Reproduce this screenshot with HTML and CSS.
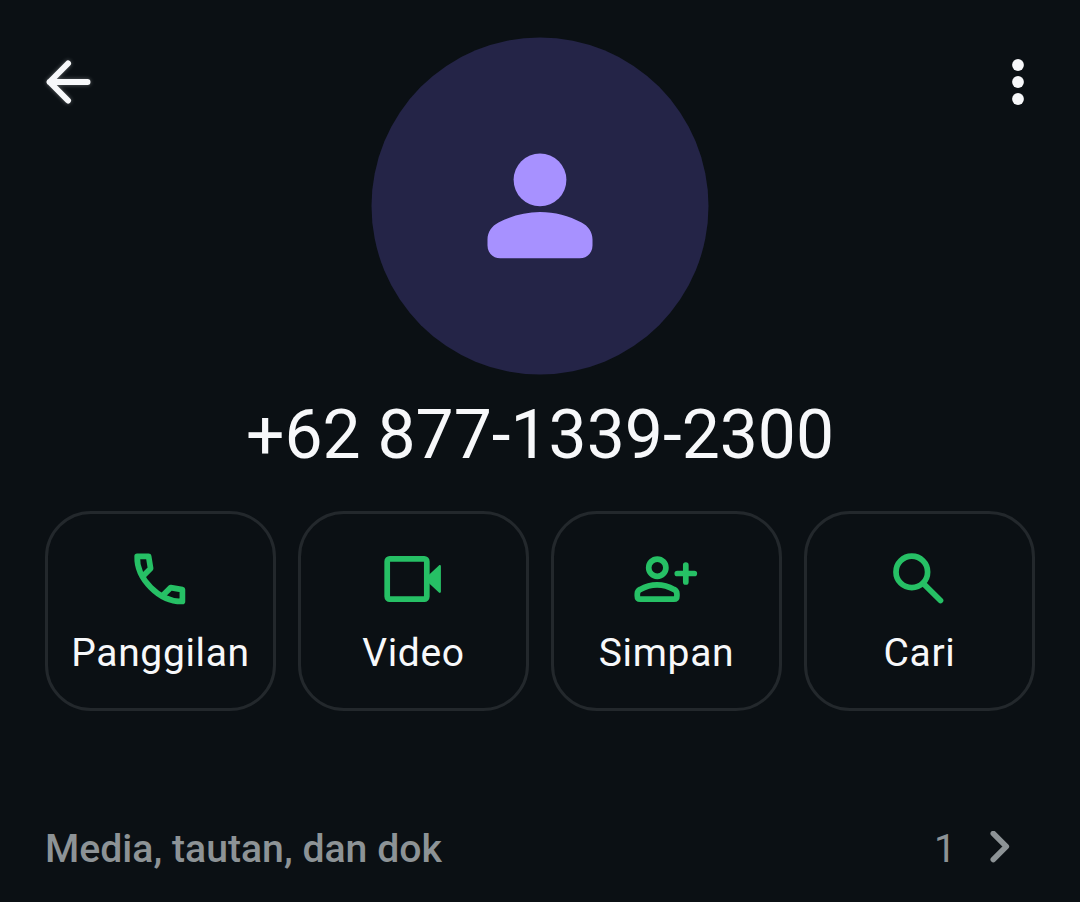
FILE: index.html
```html
<!DOCTYPE html>
<html lang="id">

<head>
  <meta charset="utf-8">
  <meta name="viewport" content="width=device-width, initial-scale=1.0">
  <title>Info kontak</title>
  <link rel="stylesheet" href="styles.css">
</head>

<body>
  <header class="header">
    <button class="icon-button" aria-label="Kembali">
      <svg class="back" width="56" height="56" viewBox="0 0 56 56">
        <path d="M28 9.500L9.600 28 28 46.500M9.600 28H47.500" />
      </svg>
    </button>
    <svg class="avatar" viewBox="0 0 338 338">
      <circle class="avatar-bg" cx="169" cy="169" r="168.500" />
      <circle cx="169" cy="142.800" r="26.400" />
      <path
        d="M116.500 202.500c0-7.500 4.300-13.600 11-17 12.500-6.500 26.700-10.500 41.500-10.500s29 4 41.500 10.500c6.700 3.400 11 9.500 11 17v6c0 7.500-5.500 12.800-12.800 12.800h-79.400c-7.300 0-12.800-5.300-12.800-12.800z" />
    </svg>
    <button class="icon-button" aria-label="Menu">
      <svg class="more" width="56" height="56" viewBox="0 0 56 56">
        <circle cx="28" cy="11" r="5.900" />
        <circle cx="28" cy="28" r="5.900" />
        <circle cx="28" cy="45" r="5.900" />
      </svg>
    </button>
  </header>

  <h1 class="number">+62 877-1339-2300</h1>

  <div class="actions">
    <button class="action">
      <svg class="icon" viewBox="0 0 68 68">
        <path
          d="M11.200 11.300h11.400l2 12.200-8 8M11.200 11.300c-.8 22.200 22 45.700 45.200 45.200V44.600l-11.700-2-8.300 8.200" />
      </svg>
      <span>Panggilan</span>
    </button>
    <button class="action">
      <svg class="icon" viewBox="0 0 68 68">
        <rect x="8.200" y="13.900" width="39.600" height="40.200" rx="2.500" />
        <path class="solid" d="M50 29.700l9.900-9.300c.8-.8 2-.3 2 .8v25.600c0 1.100-1.200 1.600-2 .8L50 38.300z" />
      </svg>
      <span>Video</span>
    </button>
    <button class="action">
      <svg class="icon" viewBox="0 0 68 68">
        <circle cx="25.300" cy="22.700" r="8.600" />
        <path
          d="M5.300 51v-2c0-2 1.100-3.700 2.900-4.600 5.100-2.900 10.700-4.600 16.900-4.600s11.800 1.700 16.900 4.600c1.800.9 2.900 2.600 2.900 4.600v2c0 2-1.100 3.200-2.900 3.200H8.200c-1.800 0-2.900-1.200-2.900-3.200z" />
        <path d="M45.300 28.500h17M53.800 20v17" />
      </svg>
      <span>Simpan</span>
    </button>
    <button class="action">
      <svg class="icon" viewBox="0 0 68 68">
        <circle cx="26.800" cy="26.900" r="15.800" />
        <path d="M38.300 38.400l17.200 17.200" />
      </svg>
      <span>Cari</span>
    </button>
  </div>

  <div class="media">
    <span class="media-title">Media, tautan, dan dok</span>
    <span class="media-count">1</span>
    <svg class="chevron" width="24" height="36" viewBox="0 0 24 36">
      <path d="M5.300 2.500l13 13-13 13" />
    </svg>
  </div>
</body>

</html>
```
FILE: styles.css
```css
body {
  margin: 0;
  background-color: #0b1014;
  color: #f7f8fa;
  font-family: Roboto, Arial, sans-serif;
  overflow: hidden;
}

button {
  background: none;
  border: none;
  padding: 0;
  color: inherit;
  font-family: inherit;
}

.header {
  display: flex;
  justify-content: space-between;
  align-items: flex-start;
  padding: 37px 34px 0 40px;
}

.icon-button {
  width: 56px;
  height: 56px;
  margin-top: 17px;
}

.icon-button svg {
  display: block;
}

.back {
  fill: none;
  stroke: #f7f8fa;
  stroke-width: 6;
  stroke-linecap: round;
  stroke-linejoin: round;
  filter: drop-shadow(0 0 2px rgba(247, 248, 250, 0.35));
}

.more {
  fill: #f7f8fa;
}

.avatar {
  width: 338px;
  height: 338px;
  margin-left: -6px;
  fill: #a791ff;
}

.avatar-bg {
  fill: #242447;
}

.number {
  margin: 20px 0 0;
  font-size: 67.8px;
  line-height: 80px;
  font-weight: 400;
  text-align: center;
}

.actions {
  display: grid;
  grid-template-columns: repeat(4, 1fr);
  gap: 22px;
  margin: 36px 45px 0;
}

.action {
  display: flex;
  flex-direction: column;
  align-items: center;
  box-sizing: border-box;
  height: 200px;
  padding-top: 31px;
  border: 3px solid #23282c;
  border-radius: 46px;
  font-size: 39px;
  line-height: 46px;
  letter-spacing: 0.65px;
}

.action span {
  margin-top: 17px;
}

.icon {
  width: 68px;
  height: 68px;
  margin-right: 1px;
  fill: none;
  stroke: #26c065;
  stroke-width: 5.7;
  stroke-linecap: round;
  stroke-linejoin: round;
}

.solid {
  fill: #26c065;
  stroke: none;
}

.media {
  display: flex;
  align-items: center;
  margin-top: 115px;
  padding: 0 68px 0 45px;
  color: #8d9396;
  font-size: 39.2px;
  line-height: 46px;
}

.media-title {
  flex: 1;
  font-weight: 500;
}

.media-count {
  margin-right: 32px;
}

.chevron {
  fill: none;
  stroke: #8d9396;
  stroke-width: 5.6;
  stroke-linecap: round;
  stroke-linejoin: round;
}
```
